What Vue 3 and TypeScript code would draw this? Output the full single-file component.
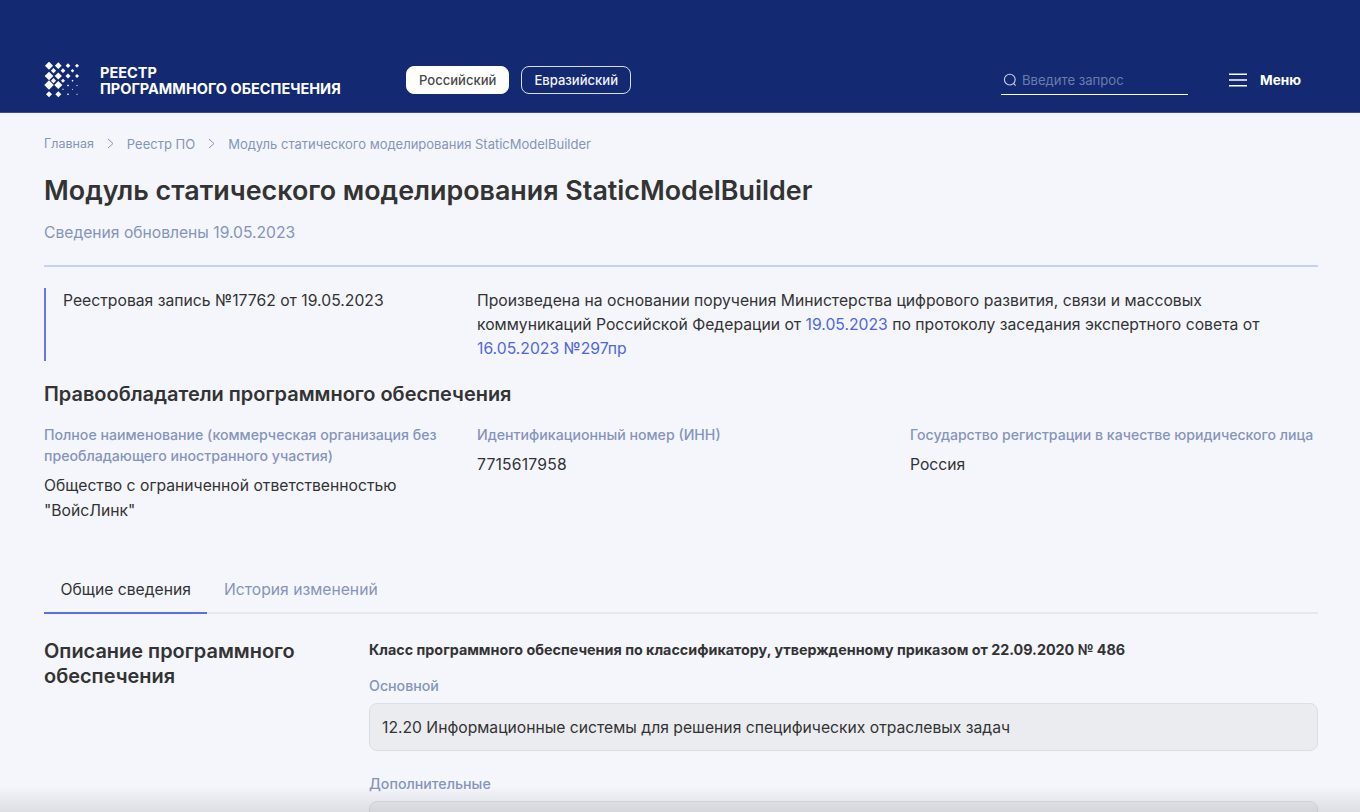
<script setup lang="ts">
interface Dot { x: number; y: number; r: number }
const dots: Dot[] = [
  { x: 5, y: 3.7, r: 4 }, { x: 14.3, y: 3.7, r: 3.4 }, { x: 24, y: 3.7, r: 2.4 }, { x: 33, y: 3.7, r: 2 },
  { x: 9.5, y: 8.7, r: 2.6 }, { x: 19, y: 8.7, r: 2.4 }, { x: 28.5, y: 8.7, r: 1.8 },
  { x: 5, y: 14, r: 4.3 }, { x: 14.3, y: 14, r: 3.6 }, { x: 24, y: 14, r: 2.5 }, { x: 33, y: 14, r: 2 },
  { x: 9.5, y: 18.7, r: 2.6 }, { x: 19, y: 18.7, r: 2 }, { x: 28.5, y: 18.7, r: 1 },
  { x: 5, y: 23, r: 4.7 }, { x: 14.3, y: 23, r: 4 }, { x: 24, y: 23.5, r: 1.1 }, { x: 33, y: 23.5, r: 0.7 },
  { x: 19, y: 27.3, r: 0.8 }, { x: 28.5, y: 27.3, r: 0.6 },
  { x: 5, y: 32.3, r: 3 }, { x: 14.3, y: 32.3, r: 3 }, { x: 24, y: 32.3, r: 1 }, { x: 33, y: 32.3, r: 0.7 },
]
const diamond = (d: Dot) => `${d.x},${d.y - d.r} ${d.x + d.r},${d.y} ${d.x},${d.y + d.r} ${d.x - d.r},${d.y}`
const crumbs = ['Главная', 'Реестр ПО']
</script>

<template>
  <div class="page">
    <header class="top">
      <a class="brand">
        <svg class="logo" width="38" height="37" viewBox="0 0 38 37">
          <polygon v-for="(d, i) in dots" :key="i" :points="diamond(d)" fill="#fff" />
        </svg>
        <span class="brand-name">РЕЕСТР<br />ПРОГРАММНОГО ОБЕСПЕЧЕНИЯ</span>
      </a>
      <nav class="switch">
        <button class="pill active">Российский</button>
        <button class="pill">Евразийский</button>
      </nav>
      <div class="search">
        <svg width="14" height="14" viewBox="0 0 14 14" fill="none" stroke="#c9d2ea" stroke-width="1.1">
          <circle cx="6.8" cy="6.6" r="5.4" />
          <path d="M10.8 10.6 12.6 12.6" />
        </svg>
        <span>Введите запрос</span>
      </div>
      <button class="menu">
        <svg width="18" height="14" viewBox="0 0 18 14" stroke="#fff" stroke-width="1.4">
          <path d="M0 1.2H18M0 7H18M0 12.8H18" />
        </svg>
        <span>Меню</span>
      </button>
    </header>

    <main class="content">
      <div class="crumbs">
        <template v-for="c in crumbs" :key="c">
          <span>{{ c }}</span>
          <svg width="7" height="11" viewBox="0 0 7 11" fill="none" stroke="#8594bb" stroke-width="1">
            <path d="M1 1l5 4.5-5 4.5" />
          </svg>
        </template>
        <span>Модуль статического моделирования StaticModelBuilder</span>
      </div>

      <h1>Модуль статического моделирования StaticModelBuilder</h1>
      <p class="updated">Сведения обновлены 19.05.2023</p>

      <section class="record">
        <div class="record-no">Реестровая запись №17762 от 19.05.2023</div>
        <div class="record-text">
          <div>Произведена на основании поручения Министерства цифрового развития, связи и массовых</div>
          <div>коммуникаций Российской Федерации от <a>19.05.2023</a> по протоколу заседания экспертного совета от</div>
          <div><a>16.05.2023 №297пр</a></div>
        </div>
      </section>

      <h2>Правообладатели программного обеспечения</h2>
      <section class="owners">
        <div>
          <div class="label">Полное наименование (коммерческая организация без преобладающего иностранного участия)</div>
          <div class="value">Общество с ограниченной ответственностью "ВойсЛинк"</div>
        </div>
        <div>
          <div class="label">Идентификационный номер (ИНН)</div>
          <div class="value digits">7715617958</div>
        </div>
        <div>
          <div class="label nowrap">Государство регистрации в качестве юридического лица</div>
          <div class="value">Россия</div>
        </div>
      </section>

      <div class="tabs">
        <button class="tab current">Общие сведения</button>
        <button class="tab">История изменений</button>
      </div>

      <section class="desc">
        <h2 class="desc-title">Описание программного обеспечения</h2>
        <div class="desc-body">
          <h3>Класс программного обеспечения по классификатору, утвержденному приказом от 22.09.2020 № 486</h3>
          <div class="field-label">Основной</div>
          <div class="field first">12.20 Информационные системы для решения специфических отраслевых задач</div>
          <div class="field-label second">Дополнительные</div>
          <div class="field tight"></div>
        </div>
      </section>
    </main>
    <div class="fade"></div>
  </div>
</template>

<style>
html, body { margin: 0; height: 100%; overflow: hidden; background: #f4f6fb; }
</style>

<style scoped>
.page {
  position: relative;
  height: 812px;
  overflow: hidden;
  background: #f4f6fb;
  font-family: Inter, "Noto Sans", sans-serif;
  color: #333;
}
button { font-family: inherit; cursor: pointer; }
.top {
  height: 113px;
  box-sizing: border-box;
  background: #132a73;
  border-bottom: 1px solid #3b4f8f;
  display: flex;
  align-items: flex-end;
  padding: 0 59px 12px 44px;
}
.brand { display: flex; align-items: center; gap: 18px; width: 362px; height: 42px; margin-bottom: -1px; }
.logo { flex: none; }
.brand-name { color: #fff; font-size: 14.5px; line-height: 16.5px; font-weight: 700; white-space: nowrap; margin-top: 2px; }
.switch { display: flex; gap: 12px; width: 595px; margin-bottom: 6px; }
.pill {
  height: 28px;
  padding: 0 12px;
  border: 1px solid #d8def0;
  border-radius: 8px;
  background: transparent;
  color: #f1f3fa;
  font-size: 13.05px;
  font-weight: 500;
}
.pill.active { background: #fff; color: #4a4a4a; border-color: #fff; }
.search {
  width: 187px;
  height: 30px;
  box-sizing: border-box;
  border-bottom: 1px solid #fff;
  display: flex;
  align-items: center;
  gap: 5px;
  padding: 0 0 0 2px;
  color: #6b7cab;
  font-size: 13.1px;
  margin-bottom: 5px;
}
.menu {
  display: flex;
  align-items: center;
  gap: 13px;
  margin: 0 0 5px 41px;
  padding: 0;
  height: 30px;
  background: none;
  border: 0;
  color: #fff;
  font-size: 13.6px;
  font-weight: 700;
}
.content { padding: 0 42px 0 44px; }
.crumbs {
  display: flex;
  align-items: center;
  gap: 13px;
  margin-top: 22px;
  height: 17px;
  font-size: 13px;
  color: #8594bb;
}
.crumbs span:first-child { font-size: 12.5px; }
h1 { margin: 21px 0 0; font-size: 26.87px; line-height: 34px; font-weight: 600; color: #333; }
.updated {
  margin: 16px 0 0;
  padding-bottom: 22px;
  font-size: 15.65px;
  line-height: 20px;
  color: #8594bb;
  border-bottom: 2px solid #c5d0f2;
}
.record { display: grid; grid-template-columns: 433px 1fr; margin-top: 21px; }
.record-no {
  border-left: 2px solid #6678dc;
  padding: 1px 0 0 17px;
  font-size: 15.72px;
  line-height: 24px;
  height: 73px;
  box-sizing: border-box;
}
.record-text { margin: 1px 0 0; font-size: 15.72px; line-height: 24px; color: #333; white-space: nowrap; }
.record-text a { color: #4f66e0; }
h2 { margin: 0; font-size: 19.95px; line-height: 24px; font-weight: 600; color: #333; }
.record + h2 { margin-top: 21px; }
.owners { display: grid; grid-template-columns: 433px 433px 1fr; margin-top: 18px; }
.owners > div { padding-right: 30px; }
.owners > div:last-child { padding-right: 0; }
.label { font-size: 14.15px; line-height: 21px; font-weight: 500; color: #8594bb; }
.label.nowrap { white-space: nowrap; font-size: 14.08px; }
.value { margin-top: 7px; font-size: 15.7px; line-height: 25px; color: #333; }
.value.digits { letter-spacing: 0.2px; }
.owners > div:first-child .value { padding-right: 30px; }
.tabs { display: flex; margin-top: 43px; border-bottom: 2px solid #e6e8ee; height: 46px; }
.tab {
  height: 48px;
  padding: 0 16.5px;
  background: none;
  border: 0;
  border-bottom: 2px solid transparent;
  font-size: 15.7px;
  color: #8594bb;
}
.tab.current { color: #333; border-bottom-color: #5a70e6; }
.desc { display: grid; grid-template-columns: 325px 1fr; margin-top: 25px; }
.desc-title { width: 280px; line-height: 25px; }
.desc-body h3 { margin: 0; font-size: 14.33px; line-height: 22px; font-weight: 700; color: #333; }
.field-label { margin-top: 15px; font-size: 14.2px; line-height: 20px; font-weight: 500; color: #8594bb; }
.field-label.second { margin-top: 23px; }
.field {
  margin-top: 8px;
  height: 48px;
  box-sizing: border-box;
  padding: 0 12px;
  display: flex;
  align-items: center;
  border: 1px solid #dcdee5;
  border-radius: 8px;
  background: #ebecf0;
  font-size: 15.7px;
  color: #333;
}
.field.first { margin-top: 7px; }
.field.tight { margin-top: 7px; }
.fade {
  position: absolute;
  left: 0;
  right: 0;
  bottom: 0;
  height: 26px;
  pointer-events: none;
  background: linear-gradient(to bottom, rgba(120, 125, 135, 0), rgba(120, 125, 135, 0.2));
}
</style>
